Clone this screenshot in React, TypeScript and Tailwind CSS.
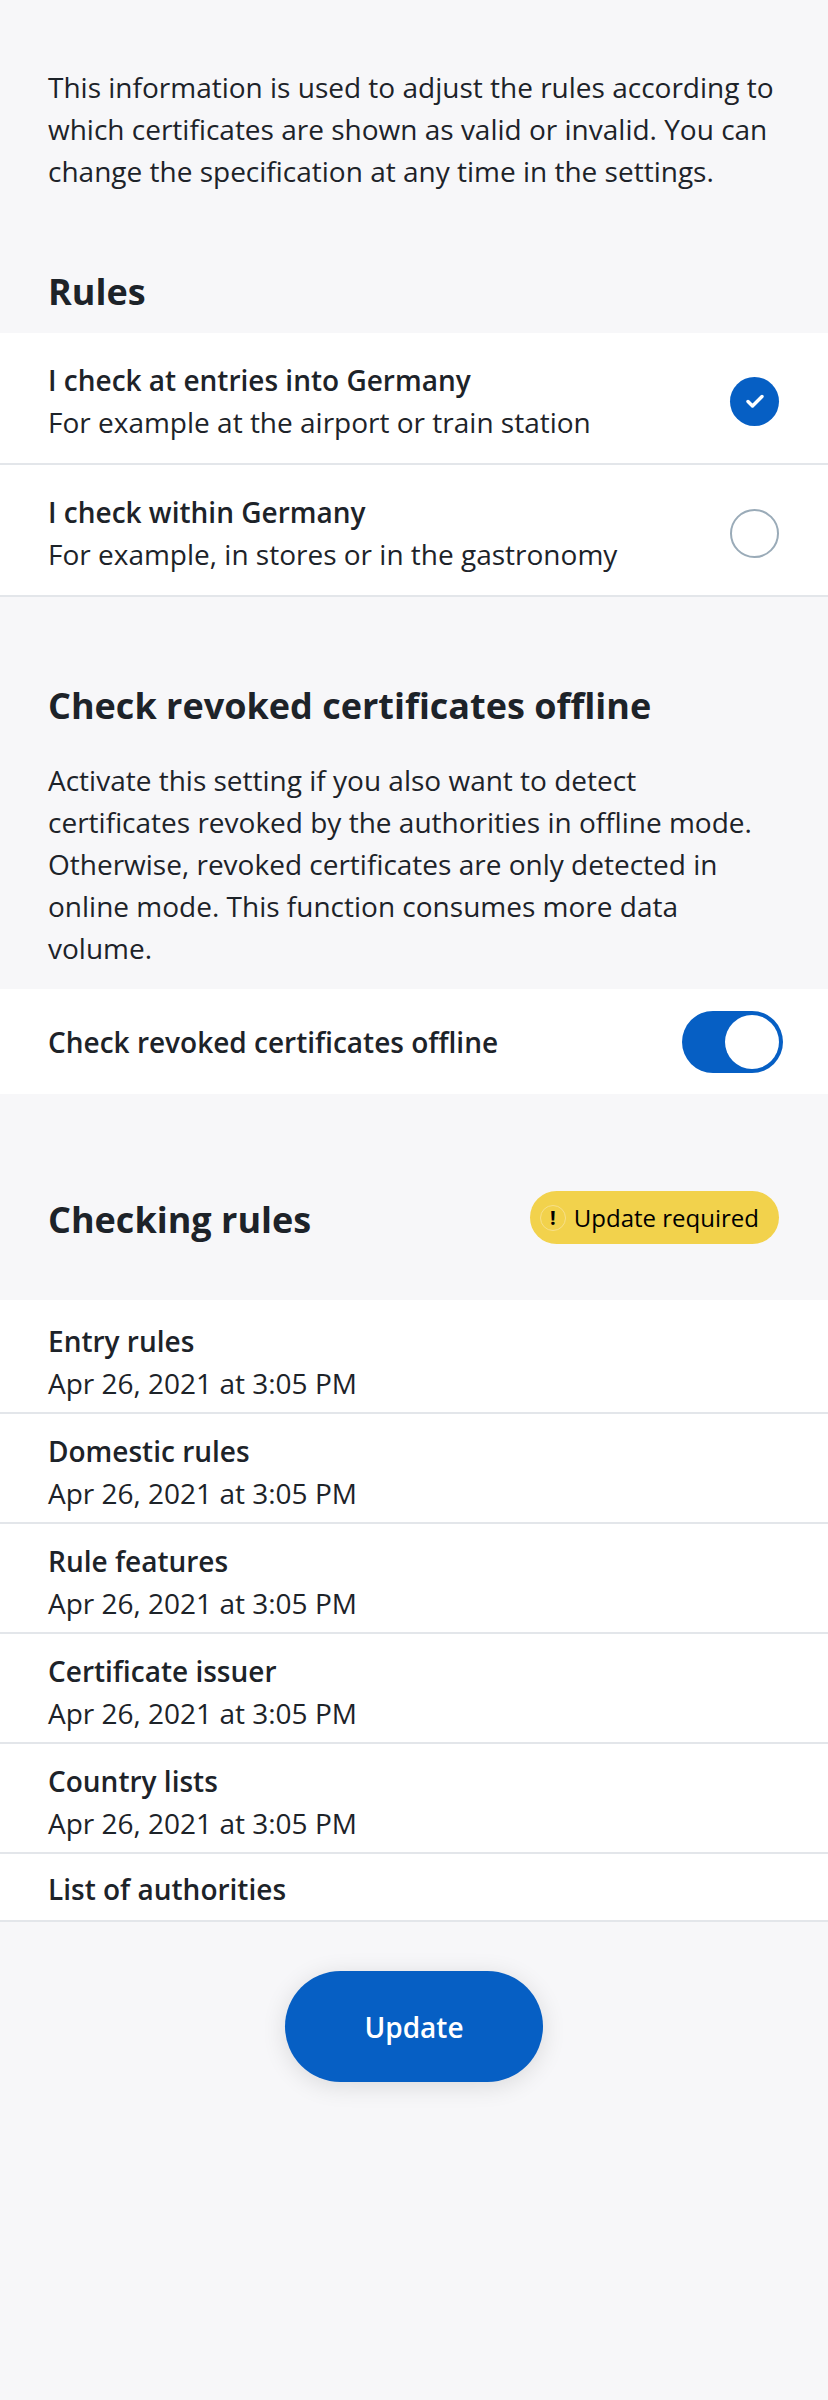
import React from 'react';

const rules = [
  { title: 'I check at entries into Germany', sub: 'For example at the airport or train station', checked: true },
  { title: 'I check within Germany', sub: 'For example, in stores or in the gastronomy', checked: false },
];

const checkingRules = [
  { title: 'Entry rules', date: 'Apr 26, 2021 at 3:05 PM' },
  { title: 'Domestic rules', date: 'Apr 26, 2021 at 3:05 PM' },
  { title: 'Rule features', date: 'Apr 26, 2021 at 3:05 PM' },
  { title: 'Certificate issuer', date: 'Apr 26, 2021 at 3:05 PM' },
  { title: 'Country lists', date: 'Apr 26, 2021 at 3:05 PM' },
];

function Radio({ checked }: { checked: boolean }) {
  if (checked) {
    return (
      <div className="w-[49px] h-[49px] rounded-full bg-[#065fc4] flex items-center justify-center shrink-0">
        <svg width="20" height="16" viewBox="0 0 20 16" fill="none">
          <path d="M3 8.5l4.5 4.5L17 3.5" stroke="white" strokeWidth="3.4" strokeLinecap="round" strokeLinejoin="round" />
        </svg>
      </div>
    );
  }
  return <div className="w-[49px] h-[49px] rounded-full border-2 border-[#9aabb8] bg-white shrink-0" />;
}

export default function App() {
  return (
    <div className="min-h-[2400px] bg-[#f7f7f9] text-[#1d2329] font-['Open_Sans',sans-serif]">
      <p className="px-12 pt-[66px] text-[28px] leading-[42px]">
        This information is used to adjust the rules according to which certificates are shown as valid or invalid. You
        can change the specification at any time in the settings.
      </p>

      <h2 className="px-12 mt-[76px] mb-[17px] text-[36px] leading-[48px] font-bold">Rules</h2>

      <div className="bg-white">
        {rules.map((r) => (
          <div key={r.title} className="flex items-center justify-between pl-12 pr-[49px] pt-[26px] pb-[20px] border-b-2 border-[#e3e6ea]">
            <div>
              <div className="text-[28px] leading-[42px] font-semibold">{r.title}</div>
              <div className="text-[28px] leading-[42px]">{r.sub}</div>
            </div>
            <Radio checked={r.checked} />
          </div>
        ))}
      </div>

      <h2 className="px-12 mt-[85px] text-[36px] leading-[48px] font-bold">Check revoked certificates offline</h2>
      <p className="px-12 mt-[29px] mb-[20px] text-[28px] leading-[42px]">
        Activate this setting if you also want to detect certificates revoked by the authorities in offline mode.
        Otherwise, revoked certificates are only detected in online mode. This function consumes more data volume.
      </p>

      <div className="bg-white h-[105px] flex items-center justify-between pl-12 pr-[45px]">
        <span className="text-[28px] leading-[42px] font-semibold">Check revoked certificates offline</span>
        <div className="w-[101px] h-[62px] rounded-full bg-[#065fc4] flex items-center justify-end p-[4px]">
          <div className="w-[54px] h-[54px] rounded-full bg-white" />
        </div>
      </div>

      <div className="flex items-center justify-between pl-12 pr-[49px] mt-[101px] mb-[56px]">
        <h2 className="text-[36px] leading-[48px] font-bold">Checking rules</h2>
        <div className="flex items-center h-[53px] pl-[10px] pr-[20px] rounded-full bg-[#f2d24c] text-[24px] text-black -mt-[4px]">
          <span className="w-[26px] h-[26px] rounded-full border border-[#f7e08a] flex items-center justify-center font-bold text-[20px] leading-none mr-[8px]">
            !
          </span>
          Update required
        </div>
      </div>

      <div className="bg-white pt-[4px]">
        {checkingRules.map((r) => (
          <div key={r.title} className="pl-12 pt-[16px] pb-[8px] border-b-2 border-[#e3e6ea]">
            <div className="text-[28px] leading-[42px] font-semibold">{r.title}</div>
            <div className="text-[28px] leading-[42px]">{r.date}</div>
          </div>
        ))}
        <div className="pl-12 pt-[14px] pb-[10px] border-b-2 border-[#e3e6ea]">
          <div className="text-[28px] leading-[42px] font-semibold">List of authorities</div>
        </div>
      </div>

      <div className="flex justify-center mt-[49px]">
        <button className="w-[258px] h-[111px] rounded-full bg-[#065fc4] text-white text-[28px] font-semibold shadow-[0_4px_24px_rgba(0,0,0,0.12)]">
          Update
        </button>
      </div>
    </div>
  );
}
